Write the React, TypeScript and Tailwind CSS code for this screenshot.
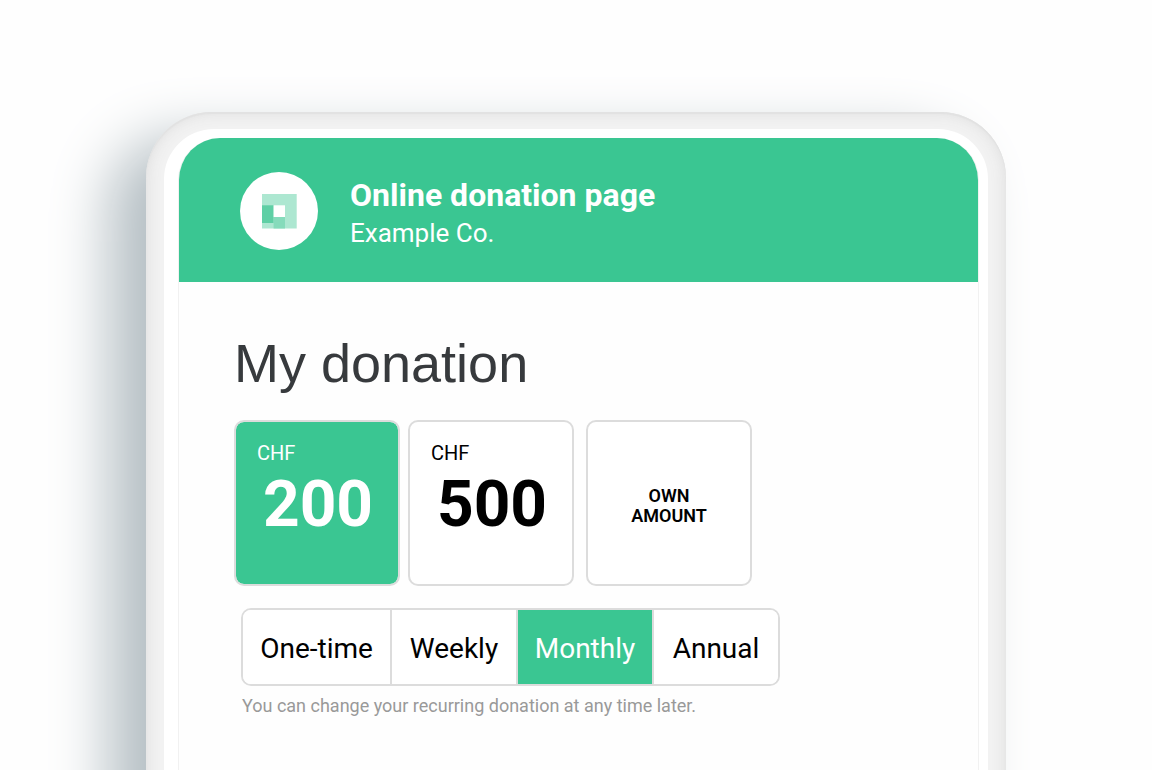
import { useState } from "react";

const amounts = [200, 500];
const frequencies = [
  { label: "One-time", width: "w-[149px]" },
  { label: "Weekly", width: "w-[126px]" },
  { label: "Monthly", width: "w-[136px]" },
  { label: "Annual", width: "w-[124px]" },
];

function Logo() {
  return (
    <svg viewBox="0 0 78 78" className="size-[78px] shrink-0" aria-hidden="true">
      <circle cx="39" cy="39" r="39" fill="#fff" />
      <rect x="22" y="22" width="34.7" height="34.5" fill="#ade7d1" />
      <rect x="22" y="33.3" width="11.6" height="17.7" fill="#5fcfa5" />
      <rect x="33.6" y="45" width="11.4" height="11.5" fill="#86dbbb" />
      <rect x="33.6" y="33.3" width="11.4" height="11.7" fill="#fff" />
    </svg>
  );
}

function AmountCard({ value, selected, onSelect }: { value: number; selected: boolean; onSelect: () => void }) {
  return (
    <button
      type="button"
      aria-pressed={selected}
      onClick={onSelect}
      className={`flex size-[166px] flex-col rounded-[10px] border-2 border-[#dcdcdc] bg-clip-padding pt-[19px] text-left ${
        selected ? "bg-[#3ac692] text-white" : "bg-white text-black"
      }`}
    >
      <span className="pl-[21px] text-xl leading-6">CHF</span>
      <span className="self-center pl-[2px] text-[64px] leading-[80px] font-bold">{value}</span>
    </button>
  );
}

export default function App() {
  const [amount, setAmount] = useState<number | null>(200);
  const [frequency, setFrequency] = useState("Monthly");

  return (
    <div className="flex min-h-screen flex-col overflow-hidden bg-[#fefefe] pt-28 font-['Roboto',sans-serif]">
      <main className="mx-auto -mb-24 flex w-full max-w-[860px] grow flex-col rounded-t-[66px] bg-[#f2f2f2] px-[18px] pt-[17px] shadow-[-37px_26px_58px_#b5bfc4,inset_0_2px_1px_#e2e2e2,inset_0_0_16px_#dcdcdc]">
        <div className="flex grow flex-col rounded-t-[50px] bg-white pt-[9px] pr-[9px] pl-[14px]">
          <div className="flex grow flex-col overflow-hidden rounded-t-[42px] border-x border-[#f1f1f1] bg-[#fefefe]">
            <header className="flex h-36 shrink-0 items-center gap-8 bg-[#3ac692] pt-[2px] pl-[61px] text-white">
              <Logo />
              <div className="pt-1">
                <h1 className="text-[32px] leading-10 font-bold">Online donation page</h1>
                <p className="text-[26px] leading-9">Example Co.</p>
              </div>
            </header>

            <section className="px-[55px] pt-[49px] pb-40">
              <h2 className="font-['Liberation_Sans',sans-serif] text-[54px] leading-[64px] text-[#373a3d]">
                My donation
              </h2>

              <div className="mt-[25px] flex flex-wrap gap-3">
                <div className="flex gap-2">
                  {amounts.map((value) => (
                    <AmountCard
                      key={value}
                      value={value}
                      selected={amount === value}
                      onSelect={() => setAmount(value)}
                    />
                  ))}
                </div>
                <button
                  type="button"
                  aria-pressed={amount === null}
                  onClick={() => setAmount(null)}
                  className={`size-[166px] rounded-[10px] border-2 border-[#dcdcdc] px-8 pt-[6px] text-lg leading-5 font-semibold ${
                    amount === null ? "bg-[#3ac692] text-white" : "bg-white text-black"
                  }`}
                >
                  OWN AMOUNT
                </button>
              </div>

              <div className="mt-[22px] ml-[7px]">
                <div className="flex h-[78px] w-fit divide-x-2 divide-[#dcdcdc] overflow-hidden rounded-[10px] border-2 border-[#dcdcdc]">
                  {frequencies.map(({ label, width }) => (
                    <button
                      key={label}
                      type="button"
                      aria-pressed={frequency === label}
                      onClick={() => setFrequency(label)}
                      className={`pt-1 text-[28px] leading-8 ${width} ${
                        frequency === label ? "bg-[#3ac692] text-white" : "bg-white text-black"
                      }`}
                    >
                      {label}
                    </button>
                  ))}
                </div>
                <p className="mt-2 pl-px text-lg leading-6 text-[#999]">
                  You can change your recurring donation at any time later.
                </p>
              </div>
            </section>
          </div>
        </div>
      </main>
    </div>
  );
}
